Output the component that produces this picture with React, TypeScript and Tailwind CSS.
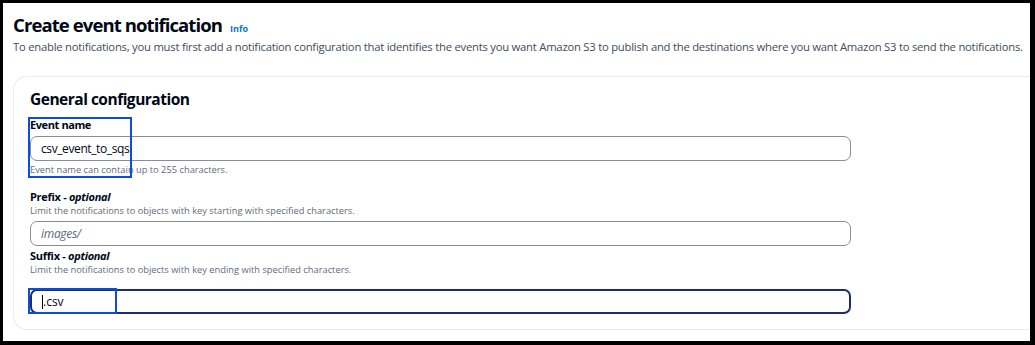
export default function App() {
  return (
    <div className="w-[1035px] h-[345px] bg-black pt-[3px] pl-[3px] pr-[5px] pb-[4px]" style={{ fontFamily: '"Open Sans", "Liberation Sans", sans-serif' }}>
      <div className="h-full bg-white overflow-hidden pl-[10px] pt-[9px]">
        <div className="flex items-baseline gap-[8px]">
          <h1 className="text-[18.5px] leading-[26px] font-bold tracking-[-0.9px] text-[#000716]">Create event notification</h1>
          <span className="text-[9px] font-bold text-[#0972d3]">Info</span>
        </div>
        <p className="mt-[1px] text-[11.3px] leading-[16px] tracking-[-0.25px] text-[#414d5c] whitespace-nowrap">
          To enable notifications, you must first add a notification configuration that identifies the events you want Amazon S3 to publish and the destinations where you want Amazon S3 to send the notifications.
        </p>

        <div className="mt-[21px] border border-r-0 border-[#e9ebed] rounded-l-[14px] pl-[16px] pt-[12px] pb-[15px]">
          <h2 className="text-[15.5px] leading-[20px] font-bold tracking-[-0.5px] text-[#000716]">General configuration</h2>

          <div className="relative mt-[9px]">
            <div className="text-[11px] leading-[14px] font-bold tracking-[-0.4px] text-[#000716]">Event name</div>
            <div className="mt-[4px] w-[821px] h-[25px] border border-[#8c8c94] rounded-[7px] flex items-center pl-[10px] text-[12px] tracking-[-0.4px] text-[#000716]">
              csv_event_to_sqs
            </div>
            <div className="mt-[3px] text-[9.3px] leading-[12px] text-[#5f6b7a]">Event name can contain up to 255 characters.</div>
            <div className="absolute left-[-2px] top-[-1px] w-[104px] h-[61px] border-2 border-[#0b4fd8]" />
          </div>

          <div className="mt-[14px]">
            <div className="text-[11px] leading-[14px] font-bold tracking-[-0.3px] text-[#000716]">
              Prefix - <span className="italic">optional</span>
            </div>
            <div className="mt-[1px] text-[9.3px] leading-[12px] text-[#5f6b7a]">Limit the notifications to objects with key starting with specified characters.</div>
            <div className="mt-[4px] w-[821px] h-[25px] border border-[#8c8c94] rounded-[7px] flex items-center pl-[10px] text-[12px] tracking-[-0.3px] italic text-[#5f6b7a]">
              images/
            </div>
          </div>

          <div className="relative mt-[3px]">
            <div className="text-[11px] leading-[14px] font-bold tracking-[-0.3px] text-[#000716]">
              Suffix - <span className="italic">optional</span>
            </div>
            <div className="mt-[1px] text-[9.3px] leading-[12px] text-[#5f6b7a]">Limit the notifications to objects with key ending with specified characters.</div>
            <div className="mt-[13px] w-[821px] h-[25px] border-2 border-[#1f2d6e] rounded-[7px] flex items-center pl-[10px] text-[12px] text-[#000716]">
              <span className="w-px h-[14px] bg-black" />.csv
            </div>
            <div className="absolute left-[-2px] top-[39px] w-[89px] h-[26px] border-2 border-[#0b4fd8]" />
          </div>
        </div>
      </div>
    </div>
  );
}
